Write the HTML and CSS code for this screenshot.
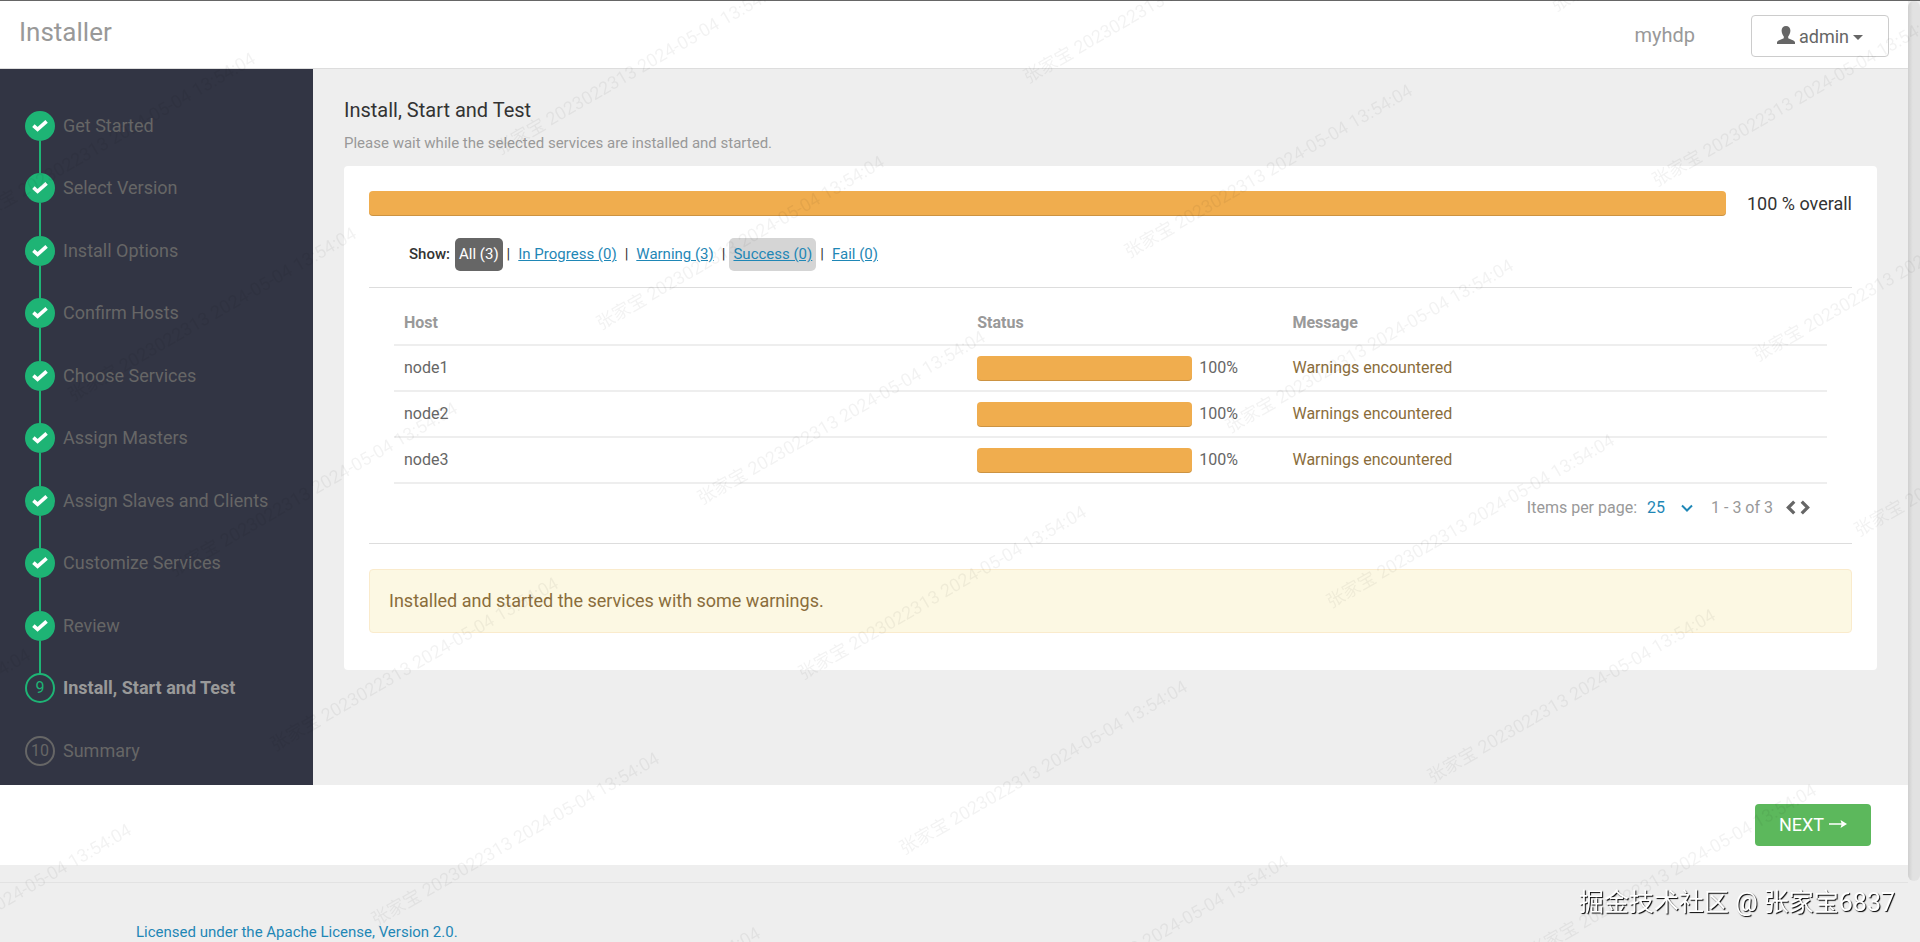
FILE: index.html
```html
<!DOCTYPE html>
<html lang="en">
<head>
    <meta charset="UTF-8">
    <meta name="viewport" content="width=device-width, initial-scale=1.0">
    <title>Installer</title>
    <link rel="stylesheet" href="styles.css">
</head>
<body>
    <svg class="sprite" aria-hidden="true">
        <symbol id="check" viewBox="0 0 16 12">
            <path d="M1.400 5.600L5.600 9.400L14.600 1.400" fill="none" stroke="#fff" stroke-width="3.600"/>
        </symbol>
    </svg>

    <div class="page">
        <header class="navbar">
            <a class="brand" href="#">Installer</a>
            <span class="cluster-name">myhdp</span>
            <button class="user-btn" type="button">
                <svg class="user-icon" viewBox="0 0 18 18" aria-hidden="true">
                    <path d="M9 0C11.600 0 13.400 1.800 13.400 4.600C13.400 7 12.400 9.200 11.200 10.400V12.200L16.400 14.400C17.500 14.900 18 15.600 18 16.600V18H0V16.600C0 15.600.5 14.900 1.600 14.400L6.800 12.200V10.400C5.600 9.200 4.600 7 4.600 4.600C4.600 1.800 6.400 0 9 0Z"/>
                </svg>
                admin
                <span class="caret"></span>
            </button>
        </header>

        <div class="wizard">
            <nav class="sidebar">
                <ol class="steps">
                    <li class="step done"><a href="#"><span class="dot"><svg><use href="#check"/></svg></span>Get Started</a></li>
                    <li class="step done"><a href="#"><span class="dot"><svg><use href="#check"/></svg></span>Select Version</a></li>
                    <li class="step done"><a href="#"><span class="dot"><svg><use href="#check"/></svg></span>Install Options</a></li>
                    <li class="step done"><a href="#"><span class="dot"><svg><use href="#check"/></svg></span>Confirm Hosts</a></li>
                    <li class="step done"><a href="#"><span class="dot"><svg><use href="#check"/></svg></span>Choose Services</a></li>
                    <li class="step done"><a href="#"><span class="dot"><svg><use href="#check"/></svg></span>Assign Masters</a></li>
                    <li class="step done"><a href="#"><span class="dot"><svg><use href="#check"/></svg></span>Assign Slaves and Clients</a></li>
                    <li class="step done"><a href="#"><span class="dot"><svg><use href="#check"/></svg></span>Customize Services</a></li>
                    <li class="step done"><a href="#"><span class="dot"><svg><use href="#check"/></svg></span>Review</a></li>
                    <li class="step active"><a href="#"><span class="dot">9</span>Install, Start and Test</a></li>
                    <li class="step"><a href="#"><span class="dot">10</span>Summary</a></li>
                </ol>
            </nav>

            <main class="content">
                <h1>Install, Start and Test</h1>
                <p class="intro">Please wait while the selected services are installed and started.</p>

                <section class="panel">
                    <div class="overall">
                        <div class="bar"></div>
                        <span>100 % overall</span>
                    </div>

                    <div class="filters">
                        <strong>Show:</strong>
                        <a class="filter selected" href="#">All (3)</a>|
                        <a class="filter" href="#">In Progress (0)</a>|
                        <a class="filter" href="#">Warning (3)</a>|
                        <a class="filter hover" href="#">Success (0)</a>|
                        <a class="filter" href="#">Fail (0)</a>
                    </div>

                    <div class="hosts">
                        <table>
                            <thead>
                                <tr><th class="col-host">Host</th><th class="col-status">Status</th><th>Message</th></tr>
                            </thead>
                            <tbody>
                                <tr>
                                    <td>node1</td>
                                    <td><div class="status"><div class="bar"></div>100%</div></td>
                                    <td><a class="warning" href="#">Warnings encountered</a></td>
                                </tr>
                                <tr>
                                    <td>node2</td>
                                    <td><div class="status"><div class="bar"></div>100%</div></td>
                                    <td><a class="warning" href="#">Warnings encountered</a></td>
                                </tr>
                                <tr>
                                    <td>node3</td>
                                    <td><div class="status"><div class="bar"></div>100%</div></td>
                                    <td><a class="warning" href="#">Warnings encountered</a></td>
                                </tr>
                            </tbody>
                        </table>

                        <div class="pager">
                            <label for="page-size">Items per page:</label>
                            <span class="select">
                                <select id="page-size">
                                    <option>10</option>
                                    <option selected>25</option>
                                    <option>50</option>
                                </select>
                                <svg viewBox="0 0 12 8" aria-hidden="true"><path d="M1 1.500L6 6.500L11 1.500"/></svg>
                            </span>
                            <span class="range">1 - 3 of 3</span>
                            <button type="button" aria-label="Previous page"><svg viewBox="0 0 10 14"><path d="M8.500 1.500L3 7L8.500 12.500"/></svg></button>
                            <button type="button" aria-label="Next page"><svg viewBox="0 0 10 14"><path d="M1.500 1.500L7 7L1.500 12.500"/></svg></button>
                        </div>
                    </div>

                    <div class="alert">Installed and started the services with some warnings.</div>
                </section>
            </main>
        </div>

        <div class="actions">
            <button class="next-btn" type="button">NEXT
                <svg viewBox="0 0 18 10" aria-hidden="true"><path d="M0 4.200H12.500L11.500 1L18 5L11.500 9L12.500 5.800H0Z"/></svg>
            </button>
        </div>

        <footer class="footer">
            <a href="#">Licensed under the Apache License, Version 2.0.</a>
        </footer>
    </div>

    <div class="scrollbar"></div>

    <div class="watermark" aria-hidden="true">
        <div class="marks" id="marks"></div>
    </div>
    <div class="signature">掘金技术社区 @ 张家宝6837</div>

    <script>
        // 5 columns x 9 rows cover the window once the grid is rotated
        const marks = document.getElementById('marks');
        for (let i = 0; i < 45; i++) {
            const mark = document.createElement('span');
            mark.textContent = '张家宝 2023022313 2024-05-04 13:54:04';
            marks.appendChild(mark);
        }
    </script>
</body>
</html>
```

FILE: styles.css
```css
* {
    box-sizing: border-box;
}

body {
    margin: 0;
    height: 100vh;
    overflow: hidden;
    padding-right: 12px;
    border-top: 1px solid #666;
    background-color: #eee;
    color: #333;
    font-family: Roboto, "Noto Sans CJK SC", sans-serif;
    font-size: 18px;
    line-height: 24px;
}

a {
    color: #1f87b6;
    text-decoration: none;
}

button,
select {
    font: inherit;
    cursor: pointer;
}

.sprite {
    position: absolute;
    width: 0;
    height: 0;
}

/* Top bar */
.navbar {
    display: flex;
    align-items: center;
    height: 68px;
    padding: 3px 19px 0;
    background-color: #fff;
    border-bottom: 1px solid #ddd;
}

.brand {
    flex: 1;
    padding-bottom: 8px;
    color: #999;
    font-size: 26px;
}

.cluster-name {
    margin-right: 56px;
    padding-bottom: 2px;
    color: #999;
    font-size: 20px;
}

.user-btn {
    display: flex;
    align-items: center;
    justify-content: center;
    gap: 4px;
    width: 138px;
    height: 42px;
    padding-top: 3px;
    background-color: #fff;
    border: 1px solid #ccc;
    border-radius: 4px;
    color: #666;
}

.user-icon {
    width: 18px;
    height: 18px;
    margin-bottom: 4px;
    fill: #666;
}

.caret {
    border: 5px solid transparent;
    border-top-color: #666;
    border-bottom: 0;
}

/* Wizard steps */
.wizard {
    display: flex;
}

.sidebar {
    width: 313px;
    background-color: #323544;
}

.steps {
    margin: 0;
    padding: 42px 25px 19px;
    list-style: none;
}

.step + .step {
    padding-top: 33px;
    background: linear-gradient(#1eb475, #1eb475) 14px 0 / 2px 33px no-repeat;
}

.step:nth-child(even) {
    padding-top: 32px;
}

.step:last-child {
    background: none;
}

.step a {
    display: flex;
    align-items: center;
    gap: 8px;
    color: #666;
}

.dot {
    display: flex;
    align-items: center;
    justify-content: center;
    width: 30px;
    height: 30px;
    border: 2px solid #666;
    border-radius: 50%;
    font-size: 16px;
    font-weight: normal;
}

.dot svg {
    width: 16px;
    height: 12px;
}

.done .dot {
    background-color: #1eb475;
    border-color: #1eb475;
}

.step.active a {
    color: #999;
    font-weight: bold;
}

.active .dot {
    border-color: #1eb475;
    color: #1eb475;
}

/* Content */
.content {
    flex: 1;
    padding: 27px 31px;
}

h1 {
    margin: 0;
    font-size: 20px;
    font-weight: normal;
    line-height: 28px;
}

.intro {
    margin: 6px 0 10px;
    color: #999;
    font-size: 15px;
    line-height: 26px;
}

.panel {
    padding: 25px 25px 37px;
    background-color: #fff;
    border-radius: 4px;
}

.bar {
    height: 25px;
    background-color: #f0ad4e;
    border-radius: 4px;
    box-shadow: inset 0 -1px 0 rgba(0, 0, 0, 0.15);
}

.overall {
    display: flex;
    align-items: center;
    gap: 21px;
}

.overall .bar {
    flex: 1;
}

.filters {
    display: flex;
    align-items: center;
    padding: 22px 40px 16px;
    border-bottom: 1px solid #ddd;
    font-size: 15px;
    line-height: 25px;
}

.filters strong {
    margin-right: 5px;
    font-weight: 500;
}

.filter {
    margin: 0 4px;
    padding: 4px;
    border-radius: 5px;
    text-decoration: underline;
}

.filter.selected {
    margin-left: 0;
    background-color: #666;
    color: #fff;
    text-decoration: none;
}

.filter.hover {
    background-color: #d5d5d5;
}

.hosts {
    padding: 10px 25px 12px;
    border-bottom: 1px solid #ddd;
    color: #666;
    font-size: 16px;
}

table {
    width: 100%;
    border-collapse: collapse;
    table-layout: fixed;
}

th,
td {
    height: 47px;
    padding: 0 10px;
    border-bottom: 2px solid #eee;
    text-align: left;
}

th {
    padding-top: 4px;
    color: #999;
    font-weight: bold;
}

td {
    height: 46px;
}

.col-host {
    width: 40%;
}

.col-status {
    width: 22%;
}

.status {
    display: flex;
    align-items: center;
    gap: 7px;
}

.status .bar {
    width: 215px;
}

.warning {
    color: #8a6d3b;
}

.pager {
    display: flex;
    align-items: center;
    justify-content: flex-end;
    height: 47px;
    padding-right: 16px;
    color: #999;
}

.select {
    display: flex;
    align-items: center;
    margin-right: 18px;
}

.select select {
    appearance: none;
    width: 44px;
    padding: 0 10px;
    background: none;
    border: 0;
    color: #1f87b6;
}

.select svg {
    width: 12px;
    height: 8px;
    fill: none;
    stroke: #1f87b6;
    stroke-width: 2;
}

.range {
    margin-right: 8px;
}

.pager button {
    display: flex;
    padding: 0;
    margin-left: 4px;
    background: none;
    border: 0;
}

.pager button svg {
    width: 11px;
    height: 15px;
    fill: none;
    stroke: #666;
    stroke-width: 3;
}

.alert {
    margin-top: 25px;
    padding: 19px;
    background-color: #fcf8e3;
    border: 1px solid #faebcc;
    border-radius: 4px;
    color: #8a6d3b;
}

/* Bottom bars */
.actions {
    display: flex;
    justify-content: flex-end;
    padding: 19px 37px;
    background-color: #fff;
}

.next-btn {
    display: flex;
    align-items: center;
    gap: 5px;
    height: 42px;
    padding: 0 24px;
    background-color: #5cb85c;
    border: 0;
    border-radius: 4px;
    color: #fff;
}

.next-btn svg {
    width: 18px;
    height: 10px;
    margin-bottom: 3px;
    fill: #fff;
}

.footer {
    margin-top: 17px;
    padding: 37px 136px 0;
    border-top: 1px solid #e2e2e2;
    font-size: 15px;
}

/* Overlays */
.scrollbar {
    position: fixed;
    top: 1px;
    right: 0;
    width: 12px;
    height: 880px;
    background: linear-gradient(to right, #cfcfcf, #e2e2e2 40%, #e2e2e2);
    border-radius: 6px;
}

.watermark {
    position: fixed;
    inset: 0;
    overflow: hidden;
    pointer-events: none;
}

.marks {
    position: absolute;
    left: -227px;
    top: -72px;
    display: grid;
    grid-template-columns: repeat(5, 493px);
    grid-auto-rows: 202px;
    transform: rotate(-30deg);
    transform-origin: 493px 808px;
    color: rgba(0, 0, 0, 0.05);
    font-size: 18px;
    white-space: nowrap;
}

.signature {
    position: fixed;
    right: 25px;
    bottom: 21px;
    color: #fff;
    font-size: 25px;
    line-height: 36px;
    text-shadow: 1px 1px 1px #000;
}
```
